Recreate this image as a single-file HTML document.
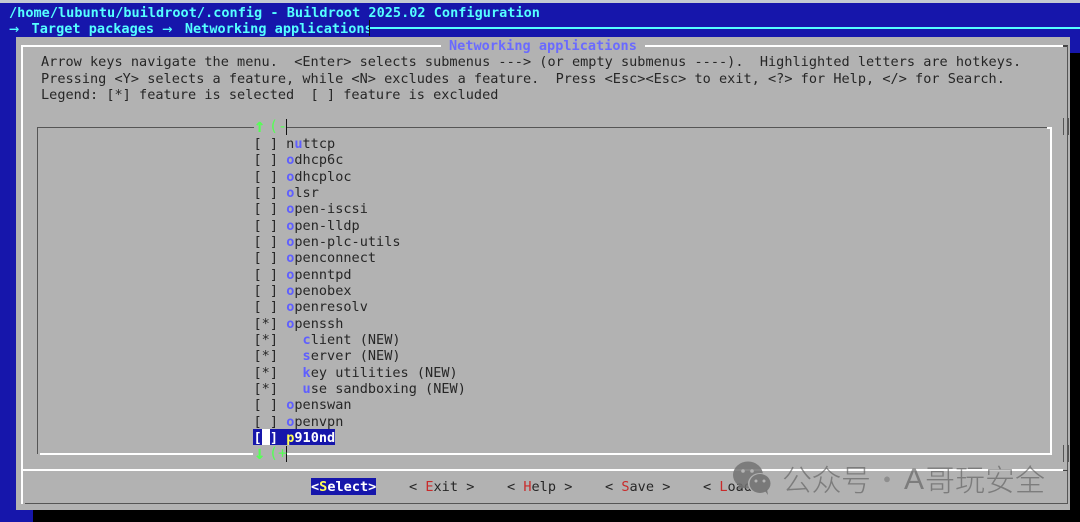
<!DOCTYPE html>
<html><head><meta charset="utf-8">
<style>
html,body{margin:0;padding:0;background:#000;}
#p{position:relative;width:1080px;height:522px;overflow:hidden;background:#000;filter:blur(.35px);font-family:"DejaVu Sans Mono","Liberation Mono",monospace;font-size:13.54px;letter-spacing:.022px;line-height:16px;color:#262626;}
.a{position:absolute;}
.t{position:absolute;white-space:pre;}
.h{color:#55ffff;font-weight:bold;}
b.o{color:#5f5fff;font-weight:bold;}
b.r{color:#c92a2a;font-weight:normal;}
b.y{color:#ffff55;font-weight:bold;}
.g{color:#55ff55;font-weight:bold;}
.w{position:absolute;white-space:pre;font-family:"Noto Sans CJK SC","Liberation Sans",sans-serif;font-size:30px;line-height:36px;letter-spacing:0;color:rgba(90,90,90,.62);font-weight:300;top:459.5px;}
.ar{display:inline-block;width:14.4px;font-size:17px;font-weight:normal;line-height:16px;vertical-align:top;}
</style></head><body>
<div id="p">
<div class="a" style="left:0;top:0;width:1080px;height:3px;background:#c4cad2"></div>
<div class="a" style="left:0;top:3px;width:1080px;height:50px;background:#1616ab"></div>
<div class="a" style="left:0;top:53px;width:33px;height:469px;background:#1616ab"></div>
<div class="a" style="left:16px;top:37px;width:1054px;height:473px;background:#b2b2b2"></div>

<div class="t h" style="left:9px;top:5px">/home/lubuntu/buildroot/.config - Buildroot 2025.02 Configuration</div>
<div class="t h" style="left:9px;top:21px;width:360px;height:16px;overflow:hidden"><span class="ar">→</span> Target packages <span class="ar">→</span> Networking applications</div>
<div class="a" style="left:370px;top:27px;width:710px;height:2px;background:#55ffff"></div>
<div class="a" style="left:369px;top:20px;width:1px;height:16px;background:#111"></div>

<div class="a" style="left:21px;top:45px;width:420px;height:2px;background:#fff"></div>
<div class="a" style="left:645px;top:45px;width:418px;height:2px;background:#fff"></div>
<div class="a" style="left:1063px;top:45px;width:5px;height:2px;background:#444"></div>
<div class="a" style="left:21px;top:45px;width:2px;height:459px;background:#fff"></div>
<div class="a" style="left:1067px;top:46px;width:1px;height:458px;background:#555"></div>
<div class="a" style="left:25px;top:503px;width:1043px;height:1px;background:#555"></div>
<div class="a" style="left:21px;top:469px;width:1042px;height:2px;background:#fff"></div>
<div class="a" style="left:1063px;top:470px;width:5px;height:1px;background:#444"></div>

<div class="t" style="left:449px;top:38px;color:#6a6aff;font-weight:bold">Networking applications</div>
<div class="t" style="left:41px;top:54px">Arrow keys navigate the menu.  &lt;Enter&gt; selects submenus ---&gt; (or empty submenus ----).  Highlighted letters are hotkeys.</div>
<div class="t" style="left:41px;top:71px">Pressing &lt;Y&gt; selects a feature, while &lt;N&gt; excludes a feature.  Press &lt;Esc&gt;&lt;Esc&gt; to exit, &lt;?&gt; for Help, &lt;/&gt; for Search.</div>
<div class="t" style="left:41px;top:87px">Legend: [*] feature is selected  [ ] feature is excluded</div>

<div class="a" style="left:37px;top:127px;width:217px;height:1px;background:#555"></div>
<div class="a" style="left:286px;top:127px;width:763px;height:1px;background:#555"></div>
<div class="a" style="left:37px;top:127px;width:1px;height:327px;background:#555"></div>
<div class="a" style="left:40px;top:453px;width:213px;height:2px;background:#fff"></div>
<div class="a" style="left:286px;top:453px;width:766px;height:2px;background:#fff"></div>
<div class="a" style="left:1050px;top:127px;width:2px;height:328px;background:#fff"></div>
<div class="a" style="left:1047px;top:127px;width:5px;height:2px;background:#fff"></div>
<div class="a" style="left:286px;top:119px;width:1px;height:16px;background:#111"></div>
<div class="a" style="left:286px;top:446px;width:1px;height:16px;background:#111"></div>
<div class="a" style="left:1063px;top:118px;width:1px;height:17px;background:#555"></div>
<div class="a" style="left:1068px;top:118px;width:1px;height:17px;background:#555"></div>
<div class="a" style="left:1063px;top:445px;width:1px;height:17px;background:#555"></div>
<div class="a" style="left:1068px;top:445px;width:1px;height:17px;background:#555"></div>

<div class="t g" style="left:254px;top:118px;font-size:19px">↑</div>
<div class="t g" style="left:269px;top:118px;font-size:15px;font-weight:normal">(-</div>
<div class="t g" style="left:254px;top:445px;font-size:19px">↓</div>
<div class="t g" style="left:269px;top:445px;font-size:15px;font-weight:normal">(+</div>

<div class="t" style="left:253.5px;top:136px">[ ] n<b class="o">u</b>ttcp</div>
<div class="t" style="left:253.5px;top:152.3px">[ ] <b class="o">o</b>dhcp6c</div>
<div class="t" style="left:253.5px;top:168.7px">[ ] <b class="o">o</b>dhcploc</div>
<div class="t" style="left:253.5px;top:185px">[ ] <b class="o">o</b>lsr</div>
<div class="t" style="left:253.5px;top:201.3px">[ ] <b class="o">o</b>pen-iscsi</div>
<div class="t" style="left:253.5px;top:217.7px">[ ] <b class="o">o</b>pen-lldp</div>
<div class="t" style="left:253.5px;top:234px">[ ] <b class="o">o</b>pen-plc-utils</div>
<div class="t" style="left:253.5px;top:250.3px">[ ] <b class="o">o</b>penconnect</div>
<div class="t" style="left:253.5px;top:266.7px">[ ] <b class="o">o</b>penntpd</div>
<div class="t" style="left:253.5px;top:283px">[ ] <b class="o">o</b>penobex</div>
<div class="t" style="left:253.5px;top:299.3px">[ ] <b class="o">o</b>penresolv</div>
<div class="t" style="left:253.5px;top:315.7px">[*] <b class="o">o</b>penssh</div>
<div class="t" style="left:253.5px;top:332px">[*]   <b class="o">c</b>lient (NEW)</div>
<div class="t" style="left:253.5px;top:348.3px">[*]   <b class="o">s</b>erver (NEW)</div>
<div class="t" style="left:253.5px;top:364.7px">[*]   <b class="o">k</b>ey utilities (NEW)</div>
<div class="t" style="left:253.5px;top:381px">[*]   <b class="o">u</b>se sandboxing (NEW)</div>
<div class="t" style="left:253.5px;top:397.3px">[ ] <b class="o">o</b>penswan</div>
<div class="t" style="left:253.5px;top:413.7px">[ ] <b class="o">o</b>penvpn</div>
<div class="a" style="left:253px;top:429px;width:82px;height:16px;background:#1616ab"></div>
<div class="a" style="left:262px;top:429px;width:8px;height:16px;background:#fff"></div>
<div class="t" style="left:253.5px;top:430px;color:#fff;font-weight:bold">[ ] <b class="y">p</b>910nd</div>

<div class="a" style="left:311px;top:478px;width:65px;height:17px;background:#1616ab"></div>
<div class="t" style="left:311px;top:479px;color:#fff;font-weight:bold">&lt;<b class="y">S</b>elect&gt;</div>
<div class="t" style="left:409px;top:479px">&lt; <b class="r">E</b>xit &gt;</div>
<div class="t" style="left:507px;top:479px">&lt; <b class="r">H</b>elp &gt;</div>
<div class="t" style="left:605px;top:479px">&lt; <b class="r">S</b>ave &gt;</div>
<div class="t" style="left:703px;top:479px">&lt; <b class="r">L</b>oad &gt;</div>

<svg class="a" style="left:732px;top:460px" width="42" height="36" viewBox="0 0 42 36">
<ellipse cx="16" cy="15" rx="15" ry="13.5" fill="#727272" fill-opacity=".85"/>
<path d="M7 24l-1 6 7-3z" fill="#727272" fill-opacity=".85"/>
<ellipse cx="28" cy="23.5" rx="12" ry="10.5" fill="#b2b2b2"/>
<ellipse cx="28" cy="23.5" rx="10.5" ry="9.5" fill="#727272" fill-opacity=".9"/>
<path d="M33 31l3 4-1-6z" fill="#727272" fill-opacity=".9"/>
<circle cx="11" cy="11" r="1.8" fill="#b4b4b4"/><circle cx="20" cy="11" r="1.8" fill="#b4b4b4"/>
<circle cx="24" cy="21" r="1.5" fill="#b4b4b4"/><circle cx="32" cy="21" r="1.5" fill="#b4b4b4"/>
</svg>
<div class="w" style="left:782px;letter-spacing:-.5px">公众号</div>
<div class="w" style="left:872px;opacity:.65">·</div>
<div class="w" style="left:904px;top:462px;font-family:'Liberation Sans',sans-serif">A</div>
<div class="w" style="left:925px">哥玩安全</div>
</div>
</body></html>
